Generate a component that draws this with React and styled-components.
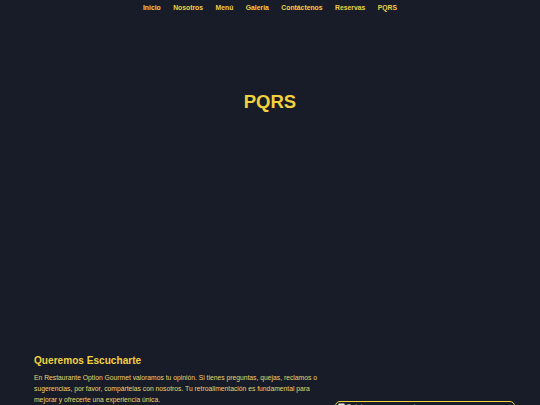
import styled, { createGlobalStyle } from "styled-components";

const GlobalStyle = createGlobalStyle`
  body {
    margin: 0;
    background: #171c28;
    font-family: "Liberation Sans", Arial, sans-serif;
  }
`;

const gold = "#f2d13e";

const NavBar = styled.nav`
  display: flex;
  justify-content: center;
  align-items: center;
  gap: 12.5px;
  height: 15px;
`;

const NavLink = styled.a`
  font-size: 6.8px;
  font-weight: bold;
  color: ${gold};
  text-decoration: none;
`;

const Hero = styled.header`
  height: 320px;
  padding-top: 76px;
  box-sizing: border-box;
  text-align: center;
`;

const Title = styled.h1`
  margin: 0;
  font-size: 18.5px;
  color: ${gold};
`;

const Section = styled.section`
  display: grid;
  grid-template-columns: 290px 180px;
  column-gap: 11px;
  padding: 20px 25px 0 34px;
`;

const Subtitle = styled.h2`
  margin: 0 0 7px;
  font-size: 10.1px;
  color: ${gold};
`;

const Text = styled.p`
  margin: 0;
  font-size: 6.75px;
  line-height: 10.75px;
  color: #eed36a;
`;

const Figure = styled.div`
  margin-top: 46px;
  height: 120px;
  border: 1px solid ${gold};
  border-radius: 5px;
  box-sizing: border-box;
  display: flex;
  align-items: flex-start;
  gap: 1px;
  padding: 1px 2px;
  font-size: 7px;
  line-height: 8px;
  color: #d9d9d9;
`;

const BrokenIcon = () => (
  <svg width="7" height="7" viewBox="0 0 16 16">
    <rect x="1" y="1" width="14" height="14" rx="2" fill="#e6e6e6" stroke="#8a8a8a" />
    <circle cx="8" cy="8" r="4" fill="#5f9bd6" />
  </svg>
);

const links = ["Inicio", "Nosotros", "Menú", "Galeria", "Contáctenos", "Reservas", "PQRS"];

export default function App() {
  return (
    <>
      <GlobalStyle />
      <NavBar>
        {links.map((l) => (
          <NavLink key={l} href="#">
            {l}
          </NavLink>
        ))}
      </NavBar>
      <Hero>
        <Title>PQRS</Title>
      </Hero>
      <Section>
        <div>
          <Subtitle>Queremos Escucharte</Subtitle>
          <Text>
            En Restaurante Option Gourmet valoramos tu opinión. Si tienes preguntas, quejas,
            reclamos o sugerencias, por favor, compártelas con nosotros. Tu retroalimentación es
            fundamental para mejorar y ofrecerte una experiencia única.
          </Text>
        </div>
        <Figure>
          <BrokenIcon />
          <span>Opiniones y sugerencias</span>
        </Figure>
      </Section>
    </>
  );
}
